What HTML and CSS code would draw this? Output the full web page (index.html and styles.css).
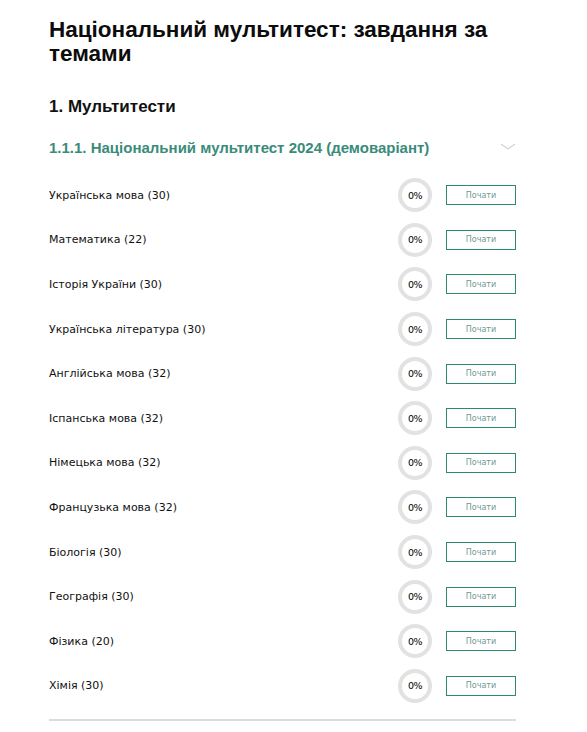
FILE: index.html
```html
<!DOCTYPE html>
<html lang="uk">
<head>
<meta charset="utf-8">
<link rel="stylesheet" href="styles.css">
</head>
<body>
<main class="page">
  <h1 class="title">Національний мультитест: завдання за темами</h1>
  <h2 class="section">1. Мультитести</h2>
  <div class="group-head">
    <h3 class="group-title">1.1.1. Національний мультитест 2024 (демоваріант)</h3>
    <svg class="chev" width="16" height="8" viewBox="0 0 16 8"><path d="M1 1 L8 6 L15 1" fill="none" stroke="#d4d4d4" stroke-width="1.2"/></svg>
  </div>
  <ul class="list">
    <li class="row"><span class="name">Українська мова (30)</span><span class="ring">0%</span><button class="btn">Почати</button></li>
    <li class="row"><span class="name">Математика (22)</span><span class="ring">0%</span><button class="btn">Почати</button></li>
    <li class="row"><span class="name">Історія України (30)</span><span class="ring">0%</span><button class="btn">Почати</button></li>
    <li class="row"><span class="name">Українська література (30)</span><span class="ring">0%</span><button class="btn">Почати</button></li>
    <li class="row"><span class="name">Англійська мова (32)</span><span class="ring">0%</span><button class="btn">Почати</button></li>
    <li class="row"><span class="name">Іспанська мова (32)</span><span class="ring">0%</span><button class="btn">Почати</button></li>
    <li class="row"><span class="name">Німецька мова (32)</span><span class="ring">0%</span><button class="btn">Почати</button></li>
    <li class="row"><span class="name">Французька мова (32)</span><span class="ring">0%</span><button class="btn">Почати</button></li>
    <li class="row"><span class="name">Біологія (30)</span><span class="ring">0%</span><button class="btn">Почати</button></li>
    <li class="row"><span class="name">Географія (30)</span><span class="ring">0%</span><button class="btn">Почати</button></li>
    <li class="row"><span class="name">Фізика (20)</span><span class="ring">0%</span><button class="btn">Почати</button></li>
    <li class="row"><span class="name">Хімія (30)</span><span class="ring">0%</span><button class="btn">Почати</button></li>
  </ul>
  <hr class="divider">
</main>
</body>
</html>
```
FILE: styles.css
```css
* { box-sizing: border-box; }
html, body { margin: 0; padding: 0; background: #fff; }
body { font-family: "DejaVu Sans", "Liberation Sans", sans-serif; color: #111; }
.page { width: 467px; margin-left: 49px; padding-top: 18px; }
.title { margin: 0; font-family: "Liberation Sans", Arial, sans-serif; font-size: 22.5px; line-height: 24px; font-weight: bold; color: #0c0c0c; }
.section { margin: 31px 0 0; font-family: "Liberation Sans", Arial, sans-serif; font-size: 17px; line-height: 20px; font-weight: bold; }
.group-head { display: flex; align-items: center; justify-content: space-between; margin-top: 19px; height: 22px; }
.group-title { margin: 0; font-family: "Liberation Sans", Arial, sans-serif; font-size: 15px; font-weight: bold; color: #3a8b7a; }
.list { list-style: none; margin: 15px 0 0; padding: 0; }
.row { display: flex; align-items: center; height: 44.6px; }
.name { flex: 1; font-size: 11px; color: #111; }
.ring { width: 34px; height: 34px; border: 4px solid #e2e2e2; border-radius: 50%; display: flex; align-items: center; justify-content: center; font-size: 9.5px; color: #000; margin-right: 14px; letter-spacing: -0.6px; }
.btn { width: 70px; height: 20px; border: 1px solid #2e8a6c; background: #fff; font-family: inherit; font-size: 8px; color: #6f9890; padding: 0; }
.divider { margin: 11px 0 0; border: 0; border-top: 2px solid #dcdcdc; }
```
